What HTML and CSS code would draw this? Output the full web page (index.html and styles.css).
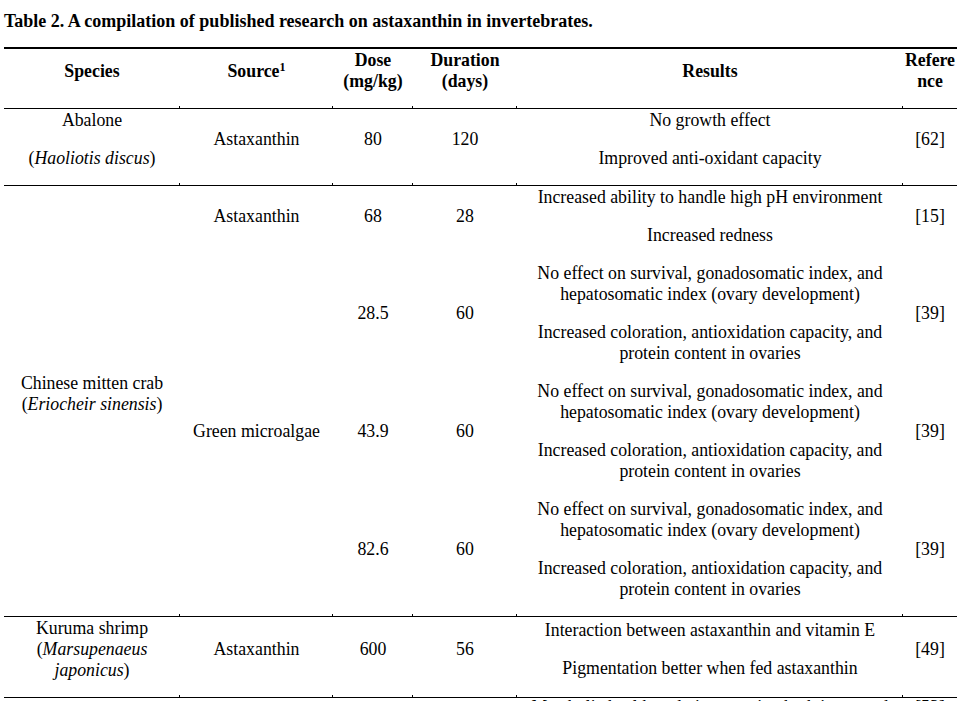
FILE: index.html
```html
<!DOCTYPE html>
<html lang="en">
<head>
<meta charset="utf-8">
<title>Table 2</title>
<link rel="stylesheet" href="styles.css">
</head>
<body>
<div class="page">
  <h1 class="caption">Table 2. A compilation of published research on astaxanthin in invertebrates.</h1>
  <table class="data">
    <colgroup>
      <col class="c-species"><col class="c-source"><col class="c-dose"><col class="c-dur"><col class="c-res"><col class="c-ref">
    </colgroup>
    <thead>
      <tr class="ruled">
        <th><p>Species</p></th>
        <th><p>Source<sup>1</sup></p></th>
        <th><p>Dose (mg/kg)</p></th>
        <th><p>Duration (days)</p></th>
        <th><p>Results</p></th>
        <th class="ref"><p>Refere<wbr>nce</p></th>
      </tr>
    </thead>
    <tbody>
      <tr class="ruled">
        <td><p>Abalone</p><p>(<i>Haoliotis discus</i>)</p></td>
        <td><p>Astaxanthin</p></td>
        <td><p>80</p></td>
        <td><p>120</p></td>
        <td><p>No growth effect</p><p>Improved anti-oxidant capacity</p></td>
        <td class="ref"><p>[62]</p></td>
      </tr>
      <tr class="open">
        <td rowspan="4" class="tick"><p>Chinese mitten crab (<i>Eriocheir sinensis</i>)</p></td>
        <td><p>Astaxanthin</p></td>
        <td><p>68</p></td>
        <td><p>28</p></td>
        <td><p>Increased ability to handle high pH environment</p><p>Increased redness</p></td>
        <td class="ref"><p>[15]</p></td>
      </tr>
      <tr class="open">
        <td rowspan="3" class="tick"><p>Green microalgae</p></td>
        <td><p>28.5</p></td>
        <td><p>60</p></td>
        <td><p>No effect on survival, gonadosomatic index, and hepatosomatic index (ovary development)</p><p>Increased coloration, antioxidation capacity, and protein content in ovaries</p></td>
        <td class="ref"><p>[39]</p></td>
      </tr>
      <tr class="open">
        <td><p>43.9</p></td>
        <td><p>60</p></td>
        <td><p>No effect on survival, gonadosomatic index, and hepatosomatic index (ovary development)</p><p>Increased coloration, antioxidation capacity, and protein content in ovaries</p></td>
        <td class="ref"><p>[39]</p></td>
      </tr>
      <tr class="ruled">
        <td><p>82.6</p></td>
        <td><p>60</p></td>
        <td><p>No effect on survival, gonadosomatic index, and hepatosomatic index (ovary development)</p><p>Increased coloration, antioxidation capacity, and protein content in ovaries</p></td>
        <td class="ref"><p>[39]</p></td>
      </tr>
      <tr class="ruled">
        <td><p>Kuruma shrimp (<i>Marsupenaeus japonicus</i>)</p></td>
        <td><p>Astaxanthin</p></td>
        <td><p>600</p></td>
        <td><p>56</p></td>
        <td><p>Interaction between astaxanthin and vitamin E</p><p>Pigmentation better when fed astaxanthin</p></td>
        <td class="ref"><p>[49]</p></td>
      </tr>
      <tr class="ruled next">
        <td><p></p></td>
        <td><p></p></td>
        <td><p></p></td>
        <td><p></p></td>
        <td><p>Metabolic health and pigmentation both improved</p></td>
        <td class="ref"><p>[53]</p></td>
      </tr>
    </tbody>
  </table>
</div>
</body>
</html>
```
FILE: styles.css
```css
html, body {
  margin: 0;
  padding: 0;
  background: #ffffff;
}

body {
  font-family: "Liberation Serif", "Times New Roman", serif;
  color: #000000;
  font-size: 17.8px;
  line-height: 21px;
}

.page {
  padding: 11px 0 0 4px;
}

.caption {
  margin: 0 0 15px 0;
  font-size: 18px;
  line-height: 21px;
  font-weight: bold;
}

.data {
  width: 953px;
  table-layout: fixed;
  border-collapse: collapse;
  border-top: 2px solid #000;
}

.c-species { width: 176px; }
.c-source { width: 153px; }
.c-dose { width: 80px; }
.c-dur { width: 104px; }
.c-res { width: 386px; }
.c-ref { width: 54px; }

.data th,
.data td {
  padding: 0 6px;
  text-align: center;
  vertical-align: middle;
  font-weight: normal;
}

.data th {
  font-weight: bold;
}

.data p {
  margin: 0 0 16px 0;
  padding-top: 1px;
  min-height: 21px;
}

.data sup {
  font-size: 12px;
  line-height: 0;
  vertical-align: 6px;
}

.data .ref {
  padding-left: 2px;
  padding-right: 2px;
}

.data tr.ruled > th,
.data tr.ruled > td,
.data td.tick {
  border-bottom: 1px solid #000;
  background-image: linear-gradient(#000, #000);
  background-repeat: no-repeat;
  background-size: 1px 2px;
  background-position: right bottom;
}

.data tr.ruled > .ref {
  background-image: none;
}

.data tr.next > td {
  vertical-align: top;
}

.data tr.next p {
  margin-top: -2px;
}
```
